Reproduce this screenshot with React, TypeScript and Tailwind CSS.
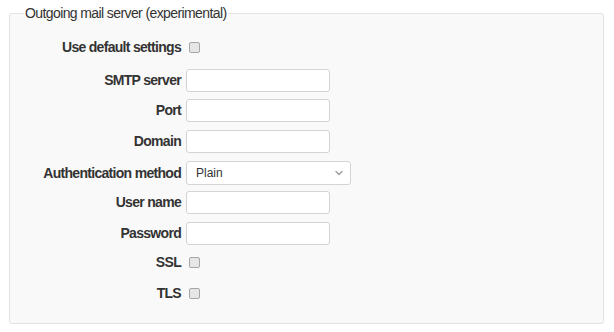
import { ChevronDown } from "lucide-react"

const LABEL = "w-[176px] shrink-0 pr-[5px] text-right text-[14px] font-bold tracking-[-0.7px] text-[#333]"
const INPUT = "h-[23px] w-[144px] rounded-[3px] border border-[#d4d4d4] bg-white"

const Check = () => (
  <span className="ml-[3px] block h-[11px] w-[11px] rounded-[2px] border border-[#a6a6a6] bg-[#e6e6e6]" />
)

const TextRow = ({ label, className }: { label: string; className: string }) => (
  <div className={`flex h-[23px] items-center ${className}`}>
    <span className={LABEL}>{label}</span>
    <div className={INPUT} />
  </div>
)

const CheckRow = ({ label, className }: { label: string; className: string }) => (
  <div className={`flex h-[20px] items-center ${className}`}>
    <span className={LABEL}>{label}</span>
    <Check />
  </div>
)

export default function App() {
  return (
    <div className="h-[332px] w-[614px] bg-white pl-[9px] pr-[10px] pt-[5px] font-['Liberation_Sans',Arial,sans-serif]">
      <fieldset className="h-[319px] rounded-[3px] border border-[#e3e3e3] bg-[#f9f9f9] px-0 pb-[20px] pt-0">
        <legend className="ml-[14px] px-[1px] text-[14px] leading-[16px] tracking-[-0.6px] text-[#333]">
          Outgoing mail server (experimental)
        </legend>
        <div className="flex flex-col pt-[16px]">
          <CheckRow label="Use default settings" className="" />
          <TextRow label="SMTP server" className="mt-[12px]" />
          <TextRow label="Port" className="mt-[7px]" />
          <TextRow label="Domain" className="mt-[8px]" />
          <div className="mt-[8px] flex h-[24px] items-center">
            <span className={LABEL}>Authentication method</span>
            <div className="flex h-[24px] w-[165px] items-center justify-between rounded-[3px] border border-[#d4d4d4] bg-white pl-[9px] pr-[5px]">
              <span className="text-[12px] text-[#333]">Plain</span>
              <ChevronDown size={12} strokeWidth={2.5} className="text-[#999]" />
            </div>
          </div>
          <TextRow label="User name" className="mt-[6px]" />
          <TextRow label="Password" className="mt-[8px]" />
          <CheckRow label="SSL" className="mt-[7px]" />
          <CheckRow label="TLS" className="mt-[11px]" />
        </div>
      </fieldset>
    </div>
  )
}
